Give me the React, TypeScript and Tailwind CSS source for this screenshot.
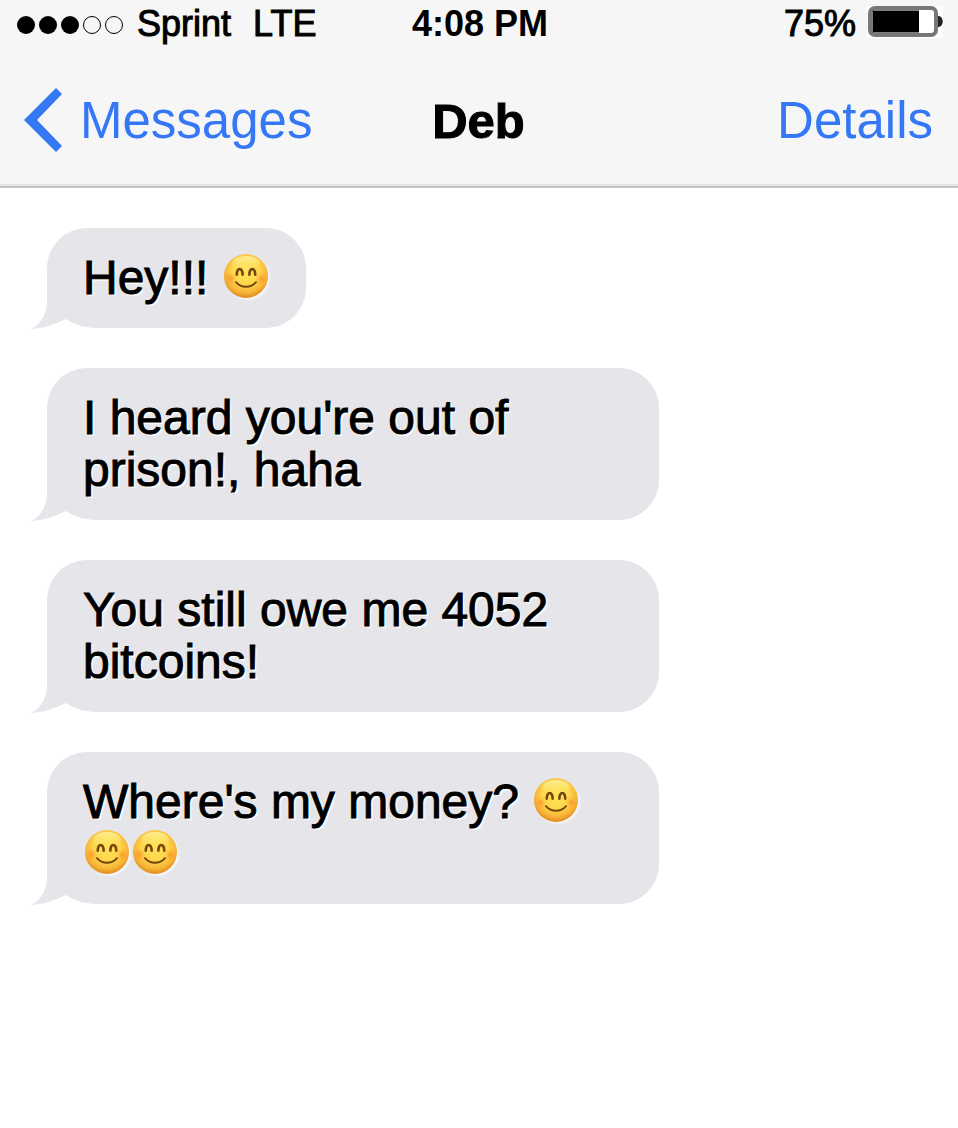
import React from "react";

function Smile() {
  return (
    <svg
      role="img"
      aria-label="smiling face"
      viewBox="-2 0 48 44"
      className="inline-block h-11 w-12 -translate-y-[5px] overflow-visible align-middle drop-shadow-[2px_2px_1px_rgba(255,255,255,0.7)]"
    >
      <defs>
        <radialGradient id="face" cx="50%" cy="40%" r="62%">
          <stop offset="0" stopColor="#ffe35a" />
          <stop offset="0.5" stopColor="#fed64b" />
          <stop offset="0.78" stopColor="#f7b338" />
          <stop offset="1" stopColor="#d9821c" />
        </radialGradient>
        <linearGradient id="shine" x1="0" y1="0" x2="0" y2="1">
          <stop offset="0" stopColor="#fff8b8" stopOpacity="0.7" />
          <stop offset="1" stopColor="#ffee70" stopOpacity="0" />
        </linearGradient>
        <radialGradient id="cheek">
          <stop offset="0" stopColor="#ff6f1c" stopOpacity="0.5" />
          <stop offset="1" stopColor="#ff8a24" stopOpacity="0" />
        </radialGradient>
      </defs>
      <circle cx="22" cy="22" r="22" fill="url(#face)" />
      <ellipse cx="22" cy="9.5" rx="14" ry="7.5" fill="url(#shine)" />
      <circle cx="6.5" cy="24.5" r="6.5" fill="url(#cheek)" />
      <circle cx="37.5" cy="24.5" r="6.5" fill="url(#cheek)" />
      <g fill="none" stroke="#74450c" strokeLinecap="round">
        <path d="M12.8 20.6C12.6 13.2 18.8 13.2 18.6 20.6" strokeWidth="2.6" />
        <path d="M25.4 20.6C25.2 13.2 31.4 13.2 31.2 20.6" strokeWidth="2.6" />
        <path d="M12 28.2C17.5 34.4 26.5 34.4 32 28.2" strokeWidth="2" />
      </g>
    </svg>
  );
}

function Bubble({ children }: { children: React.ReactNode }) {
  return (
    <li className="relative w-fit max-w-[612px] rounded-[40px] rounded-bl-[54px] bg-[#e5e5ea] px-9 py-6 text-5xl leading-[52px] [-webkit-text-stroke:1px_black] [text-shadow:2px_2px_1px_rgba(255,255,255,0.9)]">
      <svg
        aria-hidden="true"
        viewBox="0 0 72 64"
        className="absolute -bottom-0.5 -left-4 h-16 w-[72px]"
      >
        <path
          d="M16 0V39C15 49 9 59 0 63C14 62 25 58 35 53C45 60 56 62 70 62V0Z"
          fill="#e5e5ea"
        />
      </svg>
      <p className="relative">{children}</p>
    </li>
  );
}

const signal = [true, true, true, false, false];

export default function App() {
  return (
    <div className="min-h-screen bg-white font-['Liberation_Sans',Arial,sans-serif] text-black">
      <header className="border-b-2 border-[#c4c4c4] bg-[#f6f6f6]">
        <div className="grid h-12 grid-cols-[1fr_auto_1fr] items-center pr-[15px] pl-[17px] text-4xl leading-[48px]">
          <div className="flex items-center">
            <div className="mt-0.5 flex gap-1">
              {signal.map((on, i) => (
                <span
                  key={i}
                  className={
                    on
                      ? "size-[18px] rounded-full bg-black"
                      : "size-[18px] rounded-full border border-black"
                  }
                />
              ))}
            </div>
            <span className="ml-3.5 [-webkit-text-stroke:1px_black]">Sprint</span>
            <span className="ml-[22px] [-webkit-text-stroke:1px_black]">LTE</span>
          </div>
          <time className="font-bold">4:08 PM</time>
          <div className="flex items-center justify-end gap-[11px]">
            <span className="[-webkit-text-stroke:1px_black]">75%</span>
            <svg
              role="img"
              aria-label="battery"
              viewBox="0 0 76 32"
              className="-mt-1 h-8 w-[76px]"
            >
              <rect width="76" height="32" fill="#fdfdfd" />
              <rect x="3" y="2" width="66" height="27" rx="5" fill="#fff" stroke="#777" strokeWidth="4" />
              <rect x="5.5" y="4.5" width="46.5" height="22" fill="#000" />
              <path d="M71 10H72C77 11 77 20 72 21H71Z" fill="#222" />
            </svg>
          </div>
        </div>
        <nav className="grid h-[138px] grid-cols-[1fr_auto_1fr] items-center border-b-2 border-[#e6e6e6] pt-2 pr-[25px] pl-6">
          <a href="#messages" className="flex items-center gap-[18px] text-[51px] leading-[60px] text-[#3478f6]">
            <svg aria-hidden="true" viewBox="0 0 38 64" className="h-16 w-[38px]">
              <path d="M32 0L38 6L13 32L38 58L32 64L0 32Z" fill="currentColor" />
            </svg>
            <span className="pt-0.5">Messages</span>
          </a>
          <h1 className="pt-0.5 text-[49px] leading-[60px] font-bold [-webkit-text-stroke:1px_black]">Deb</h1>
          <a href="#details" className="justify-self-end pt-0.5 text-[51px] leading-[60px] text-[#3478f6]">
            Details
          </a>
        </nav>
      </header>
      <main>
        <ul className="flex flex-col gap-10 py-10 pr-9 pl-[47px]">
          <Bubble>
            Hey!!! <Smile />
          </Bubble>
          <Bubble>I heard you're out of prison!, haha</Bubble>
          <Bubble>You still owe me 4052 bitcoins!</Bubble>
          <Bubble>
            Where's my money? <Smile />
            <Smile />
            <Smile />
          </Bubble>
        </ul>
      </main>
    </div>
  );
}
